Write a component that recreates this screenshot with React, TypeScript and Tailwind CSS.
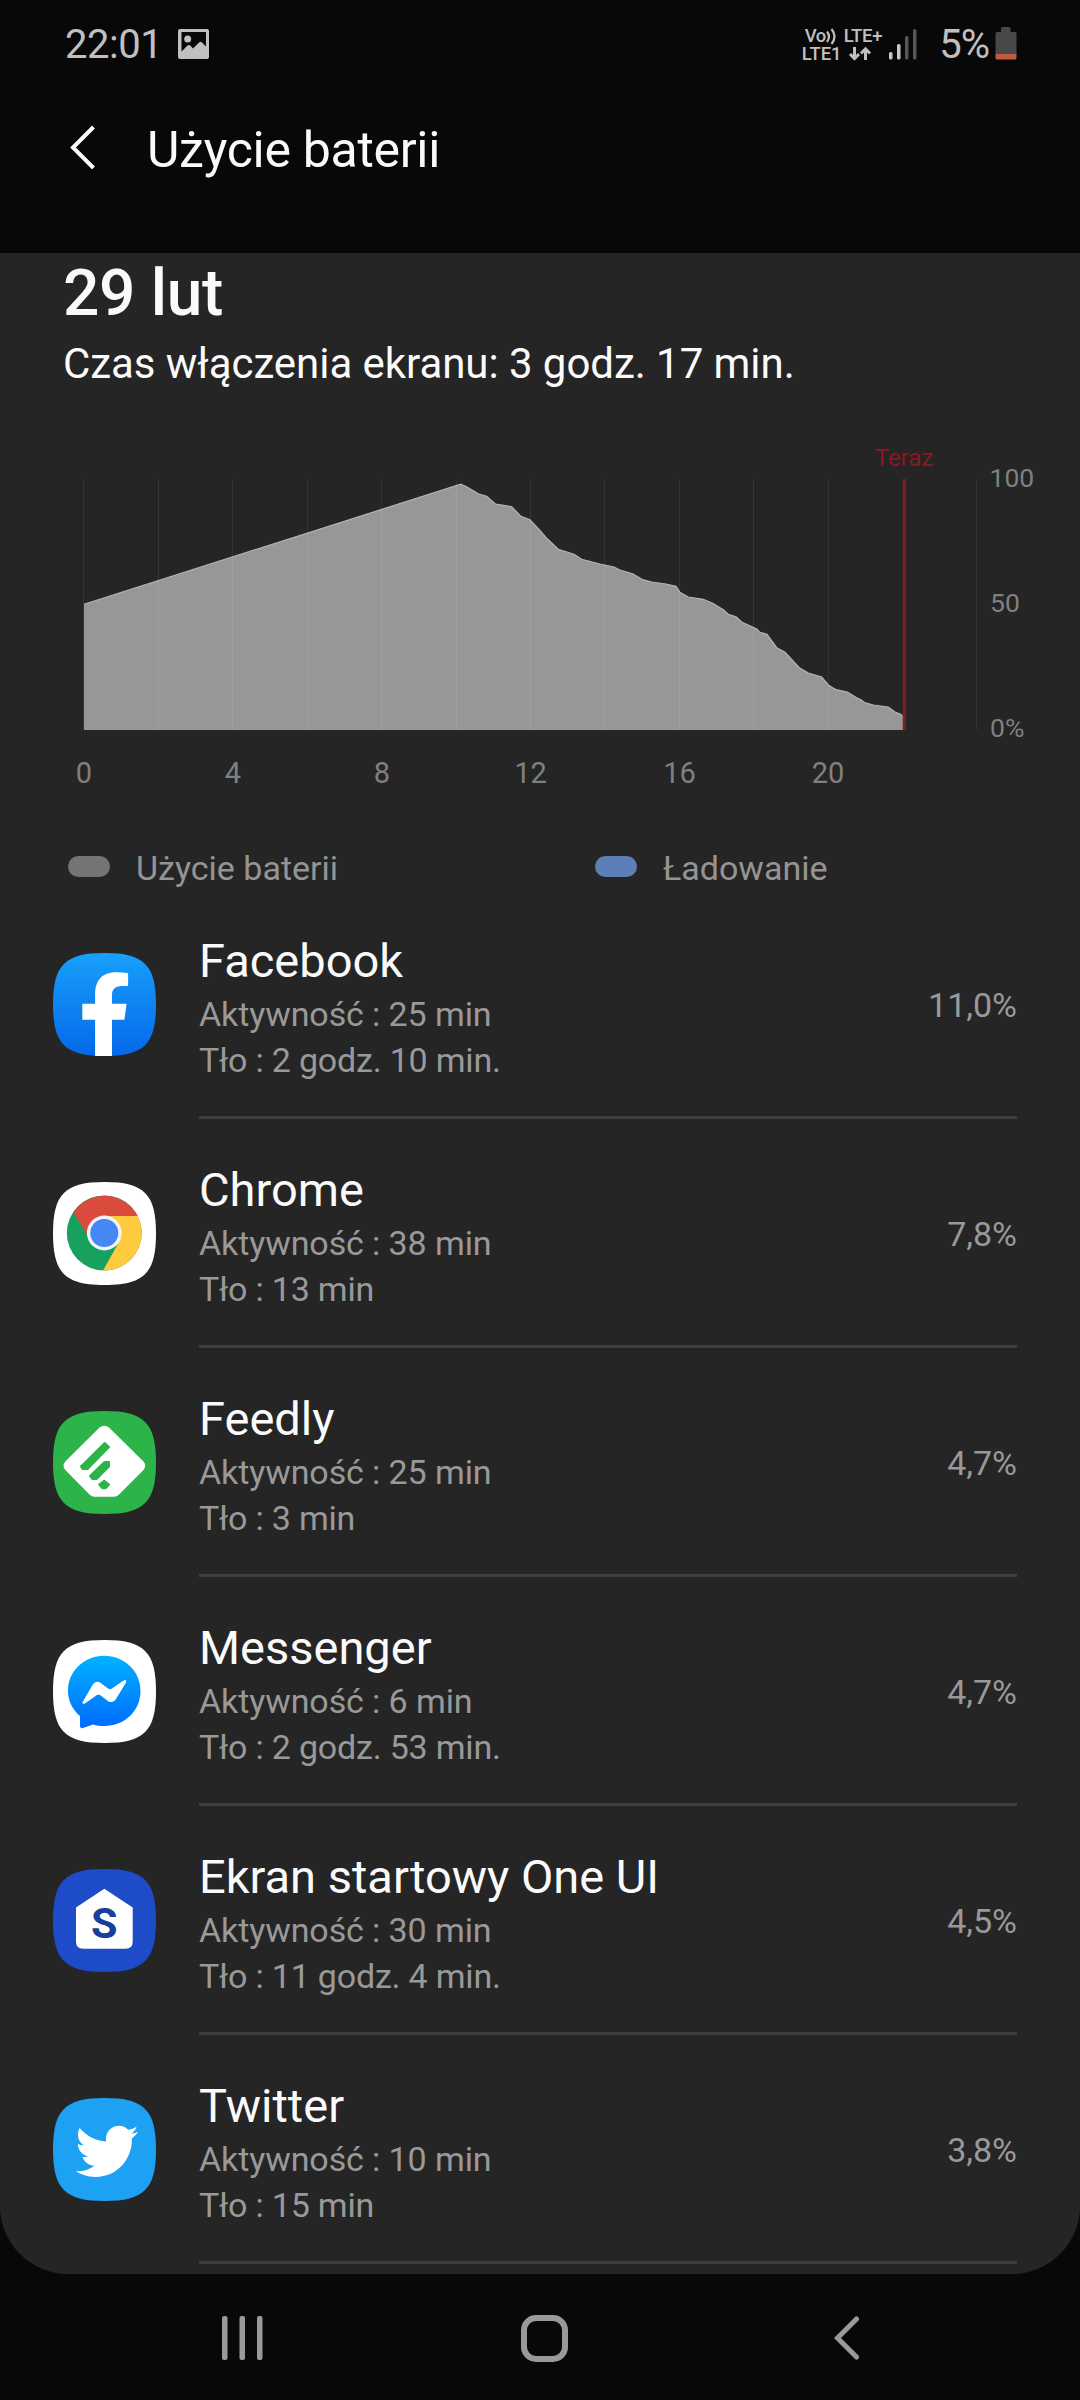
import React from 'react';
import { FaTwitter } from 'react-icons/fa';

const SQUIRCLE = 'M0 51.5C0 12 12 0 51.5 0S103 12 103 51.5 91 103 51.5 103 0 91 0 51.5Z';

// Battery level over the day, as [x, y] in chart pixels
const levels = [
  [84, 174.3], [460.7, 54.2], [466.7, 56.7], [478.3, 63.7], [486.7, 66.3], [495.7, 74.2], [511.7, 76.7],
  [521, 86.3], [530, 89.7], [540, 100.3], [546.7, 108.3], [558.3, 119.3], [574, 124.3], [581.7, 129.3],
  [600, 134], [614, 137], [620, 140], [632.7, 143.7], [642.7, 149.7], [651.7, 152], [666, 154],
  [676, 156.3], [680, 162.3], [688.3, 167], [703.3, 169.3], [712.7, 173.3], [723.3, 179.7],
  [728.3, 184.3], [736, 186.7], [741.7, 192], [756.7, 199], [760, 202.3], [767, 204.3], [776.7, 217.7],
  [785, 222.3], [799.3, 237.7], [808.3, 243], [821.7, 247], [828.3, 255], [836, 259.7], [847.3, 262],
  [856.7, 267.7], [861, 269.7], [864, 272.3], [873.3, 275], [888.3, 277], [895, 282], [900.7, 284.3],
  [903, 287],
];

const gridLines = [83.5, 158.5, 232.5, 307.5, 381.5, 456.5, 530.5, 604.5, 679.5, 753.5, 828.5, 976.5];

const hours = [
  { label: '0', x: 84 },
  { label: '4', x: 233 },
  { label: '8', x: 382 },
  { label: '12', x: 530.5 },
  { label: '16', x: 679.5 },
  { label: '20', x: 828 },
];

const Tile: React.FC<{ fill: string; children: React.ReactNode }> = ({ fill, children }) => (
  <svg width="103" height="103" viewBox="0 0 103 103" className="block">
    <path d={SQUIRCLE} fill={fill} />
    {children}
  </svg>
);

const FacebookIcon = () => (
  <Tile fill="url(#fb)">
    <defs>
      <linearGradient id="fb" x1="0" y1="0" x2="0" y2="1">
        <stop offset="0" stopColor="#18a0fb" />
        <stop offset="1" stopColor="#0568e8" />
      </linearGradient>
    </defs>
    <path
      fill="#fff"
      d="M42.1 103V66.7H29.3V50.7H42.1V42C42.1 26 50 19.2 64 19.2Q70 19.2 75.1 20.2V33H69C61.5 33 59 37 59 42V50.7H73.6L71.4 66.7H59V103Z"
    />
  </Tile>
);

const ChromeIcon = () => (
  <Tile fill="#fff">
    <circle cx="51.3" cy="51" r="37.5" fill="#17a05e" />
    <path fill="#fecb3e" d="M51.3 34H84.7A37.5 37.5 0 0 1 50 88.5L66 60Z" />
    <path fill="#da4a3d" d="M20.3 30.3A37.5 37.5 0 0 1 84.7 34H51.3L35.5 55Z" />
    <circle cx="51.3" cy="51" r="17.4" fill="#f1f3f8" />
    <circle cx="51.3" cy="51" r="14" fill="#4587f3" />
  </Tile>
);

const FeedlyIcon = () => (
  <Tile fill="#2cb34a">
    <path
      fill="#fff"
      d="M46.5 16.5Q51.2 12.9 56 16.5L90.5 50.5Q94 54.7 90.5 59L65.5 84Q63.5 85.8 61 85.8H41.3Q39 85.8 37 84L12.3 59Q8.8 54.7 12.3 50.5Z"
    />
    <g fill="#2cb34a" stroke="#2cb34a" strokeWidth="2" strokeLinejoin="round">
      <path d="M51.7 32L56 36L34.5 58H29.5L28 55.5Z" />
      <path d="M51.5 51H56V55.5L43.5 68H39.5L37 65Z" />
      <path d="M51.2 69.8L56 73.5L52.5 77.3H49.5L46.2 73.5Z" />
    </g>
  </Tile>
);

const MessengerIcon = () => (
  <Tile fill="#fff">
    <defs>
      <linearGradient id="msg" x1="0" y1="0" x2="0" y2="1">
        <stop offset="0" stopColor="#00b2ff" />
        <stop offset="1" stopColor="#006bff" />
      </linearGradient>
    </defs>
    <path
      fill="url(#msg)"
      d="M51.2 15.7C31 15.7 15 31 15 51C15 61.5 20 70 27 76V86Q27.3 88.8 30 88L40 84.5C43.5 85.6 47.5 86 51.2 86C71.5 86 87.5 71 87.5 51S71.5 15.7 51.2 15.7Z"
    />
    <path
      fill="#fff"
      d="M29.4 62.5L39.8 44.5Q42.7 40.2 47 42.5L55.5 48.8Q57 49.6 58.5 48.8L71 40.3Q74 39.3 73 42.5L62.5 59.8Q59.8 63.3 55.5 61.5L47 55Q45.5 54.2 44 55L31.5 63.7Q29.3 64.3 29.4 62.5Z"
    />
  </Tile>
);

const OneUiHomeIcon = () => (
  <Tile fill="#1e4bc8">
    <path fill="#fff" d="M51.3 19.7L79.7 38.5V72.5Q79.7 79.7 72.5 79.7H30.2Q23 79.7 23 72.5V38.5Z" />
    <text x="51.3" y="69" textAnchor="middle" fill="#173f9c" className="font-['Roboto',sans-serif] text-[43px] font-bold">
      S
    </text>
  </Tile>
);

const TwitterIcon = () => (
  <Tile fill="#1da1f2">
    <FaTwitter x="22.3" y="21.8" size={63} color="#fff" />
  </Tile>
);

const apps = [
  { name: 'Facebook', active: '25 min', background: '2 godz. 10 min.', percent: '11,0%', Icon: FacebookIcon },
  { name: 'Chrome', active: '38 min', background: '13 min', percent: '7,8%', Icon: ChromeIcon },
  { name: 'Feedly', active: '25 min', background: '3 min', percent: '4,7%', Icon: FeedlyIcon },
  { name: 'Messenger', active: '6 min', background: '2 godz. 53 min.', percent: '4,7%', Icon: MessengerIcon },
  { name: 'Ekran startowy One UI', active: '30 min', background: '11 godz. 4 min.', percent: '4,5%', Icon: OneUiHomeIcon },
  { name: 'Twitter', active: '10 min', background: '15 min', percent: '3,8%', Icon: TwitterIcon },
];

const StatusBar = () => (
  <div className="flex h-[90px] items-center pl-[65px] pr-[63px] text-[40px] leading-[92px] text-[#c0c0c0]">
    <span className="tracking-[-0.5px]">22:01</span>
    <svg width="32" height="30" viewBox="0 0 32 30" className="-mt-[3px] ml-[16px]">
      <path
        fill="currentColor"
        fillRule="evenodd"
        d="M2 0H29Q31 0 31 2V28Q31 30 29 30H2Q0 30 0 28V2Q0 0 2 0ZM3.5 3V22.5L9.5 16.5Q11 15.5 12.5 16.8L15 19.5L21 13.5Q22.5 12 24 13.5L28 17.5V3Z"
      />
      <circle cx="9.7" cy="10" r="3.5" fill="currentColor" />
    </svg>
    <div className="ml-auto flex flex-col text-[18.5px] font-medium leading-[18px]">
      <div className="flex items-center">
        <span className="pl-[3px] tracking-[-0.5px]">Vo</span>
        <svg width="12" height="18" viewBox="0 0 12 18" className="-ml-px" fill="none" stroke="currentColor" strokeWidth="2.2">
          <path d="M2 4.5Q6 9.5 2 15M6.5 2Q12.5 9.5 6.5 17" />
        </svg>
        <span className="ml-[7px] tracking-[-0.3px]">LTE+</span>
      </div>
      <div className="flex items-center">
        <span>LTE1</span>
        <svg width="24" height="16" viewBox="0 0 24 16" className="ml-[6px]" fill="none" stroke="currentColor" strokeWidth="3">
          <path d="M6.5 1V12M2 8L6.500 12.700L11 8M17.500 14V3M13 7.500L17.500 2.800L22 7.500" />
        </svg>
      </div>
    </div>
    <svg width="28" height="31" viewBox="0 0 28 31" className="-mt-[1px] ml-[7px]">
      <rect x="0" y="23" width="3.5" height="7.5" rx="1.5" fill="#c8c8c8" />
      <rect x="8" y="15" width="3.5" height="15.5" rx="1.5" fill="#c8c8c8" />
      <rect x="16" y="7" width="3.5" height="23.5" rx="1.5" fill="#555" />
      <rect x="24" y="0" width="3.5" height="30.5" rx="1.5" fill="#555" />
    </svg>
    <span className="ml-[22px] tracking-[-1px]">5%</span>
    <svg width="22" height="33" viewBox="0 0 22 33" className="-mt-[3px] ml-[6px]">
      <path fill="#484848" d="M6 1.5Q6 0 7.5 0H14Q15.5 0 15.5 1.5V5H20Q21.5 5 21.5 6.5V27H0.5V6.5Q0.5 5 2 5H6Z" />
      <path fill="#bf5d3e" d="M0.5 27H21.5V31Q21.5 32.5 20 32.5H2Q0.5 32.5 0.5 31Z" />
    </svg>
  </div>
);

const Header = () => (
  <header className="flex h-[163px] items-start pl-[70px] pt-[25px] text-[#fafafa]">
    <svg width="26" height="44" viewBox="0 0 26 44" className="mt-[10px]" fill="none" stroke="currentColor" strokeWidth="4">
      <path d="M23.5 2L3 22.5L23.5 43" />
    </svg>
    <h1 className="ml-[51px] text-[50px] leading-[70px] tracking-[-0.3px]">Użycie baterii</h1>
  </header>
);

const UsageChart = () => {
  const line = levels.map((p) => p.join(' ')).join('L');

  return (
    <svg width="1080" height="380" viewBox="0 0 1080 380" className="mt-[38px] block font-['Roboto',sans-serif]">
      <path d={`M84 300L${line}V300Z`} fill="#979797" />
      <path d={`M${line}`} fill="none" stroke="#b4b4b4" strokeWidth="1.2" />
      {gridLines.map((x) => (
        <path key={x} d={`M${x} 49V300`} stroke="#fff" strokeOpacity="0.07" />
      ))}
      <rect x="902.7" y="49" width="3" height="251.5" fill="#7e1e28" />
      <text x="904" y="35.7" textAnchor="middle" fill="#8a1722" className="text-[24px]">
        Teraz
      </text>
      <g fill="#808080" className="text-[26.5px]">
        <text x="989.5" y="57.3">100</text>
        <text x="990" y="182">50</text>
        <text x="990" y="307">0%</text>
      </g>
      <g fill="#808080" textAnchor="middle" className="text-[29px]">
        {hours.map((hour) => (
          <text key={hour.label} x={hour.x} y="352.7">
            {hour.label}
          </text>
        ))}
      </g>
    </svg>
  );
};

const Legend = () => (
  <div className="flex h-20 pt-[38px] text-[34px] leading-[40px] text-[#949494]">
    <div className="flex w-[527px] pl-[68px]">
      <span className="mt-[8px] h-[21px] w-[42px] rounded-full bg-[#747474]" />
      <span className="ml-[26px]">Użycie baterii</span>
    </div>
    <div className="flex pl-[68px]">
      <span className="mt-[8px] h-[21px] w-[42px] rounded-full bg-[#5c7fb8]" />
      <span className="ml-[26px]">Ładowanie</span>
    </div>
  </div>
);

const NavBar = () => (
  <nav className="flex h-[128px] items-center text-[#999]">
    <svg width="42" height="44" viewBox="0 0 42 44" className="ml-[222px]" fill="currentColor">
      <rect x="0" y="0" width="5.5" height="44" rx="2" />
      <rect x="17.5" y="0" width="5.5" height="44" rx="2" />
      <rect x="35" y="0" width="5.5" height="44" rx="2" />
    </svg>
    <div className="ml-[257px] h-[47px] w-[47px] rounded-[15px] border-[6px] border-[#999]" />
    <svg width="26" height="44" viewBox="0 0 26 44" className="ml-[266px]" fill="none" stroke="currentColor" strokeWidth="5" strokeLinecap="round">
      <path d="M22.5 3L3.5 22L22.5 41" />
    </svg>
  </nav>
);

const App: React.FC = () => {
  return (
    <div className="h-[2400px] w-[1080px] overflow-hidden bg-[#080808] font-['Roboto',sans-serif]">
      <StatusBar />
      <Header />
      <main className="h-[2021px] overflow-hidden rounded-b-[68px] bg-[#252525] pt-[3px]">
        <h2 className="pl-[63px] text-[64px] font-medium leading-[76px] tracking-[-0.3px] text-[#fafafa]">29 lut</h2>
        <p className="mt-[4px] pl-[63px] text-[42px] leading-[56px] tracking-[-0.05px] text-[#fafafa]">
          Czas włączenia ekranu: 3 godz. 17 min.
        </p>
        <UsageChart />
        <Legend />
        <ul>
          {apps.map(({ name, active, background, percent, Icon }) => (
            <li key={name} className="flex h-[229px] pl-[53px] pr-[63px]">
              <div className="pt-[63px]">
                <Icon />
              </div>
              <div className="ml-[43px] flex flex-1 border-b-[3px] border-[#3f3f3f]">
                <div className="flex-1 pt-[41px] text-[34px] leading-[46px] text-[#999]">
                  <h3 className="text-[47px] leading-[60px] text-[#fafafa]">{name}</h3>
                  <p className="tracking-[-0.1px]">Aktywność : {active}</p>
                  <p className="tracking-[-0.2px]">Tło : {background}</p>
                </div>
                <span className="pt-[92px] text-[34px] leading-[46px] text-[#999]">{percent}</span>
              </div>
            </li>
          ))}
        </ul>
      </main>
      <NavBar />
    </div>
  );
};

export default App;
